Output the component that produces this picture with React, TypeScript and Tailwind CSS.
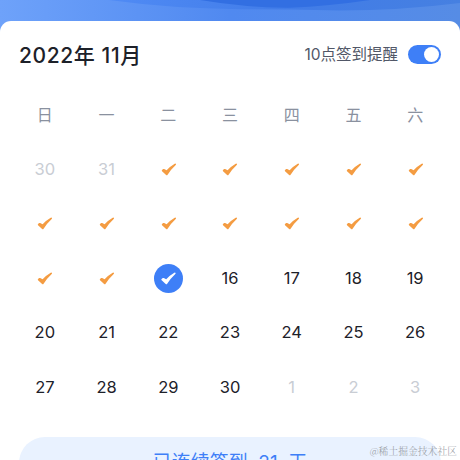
import clsx from "clsx";
import { useState } from "react";

const WEEKDAYS = ["日", "一", "二", "三", "四", "五", "六"];

type DayState = "outside" | "signed" | "today" | "future";

interface Day {
    date: number;
    state: DayState;
}

const TODAY = 15;

const DAYS: Day[] = [
    { date: 30, state: "outside" },
    { date: 31, state: "outside" },
    ...Array.from({ length: 30 }, (_, i): Day => {
        const date = i + 1;
        return { date, state: date < TODAY ? "signed" : date === TODAY ? "today" : "future" };
    }),
    { date: 1, state: "outside" },
    { date: 2, state: "outside" },
    { date: 3, state: "outside" },
];

export default function App() {
    const [remind, setRemind] = useState(true);

    return (
        <div className="relative h-[460px] w-[460px] overflow-hidden bg-white font-['Inter','Noto_Sans_CJK_SC',sans-serif]">
            <Banner />

            <main className="relative mt-[20.5px] h-[440px] rounded-t-[11px] bg-white">
                <header className="flex h-[68px] items-center justify-between pr-[19px] pl-[19px]">
                    <h1 className="pt-px text-[21px] leading-none font-medium tracking-[0.6px] text-[#1d2129]">
                        2022年 11月
                    </h1>
                    <div className="flex items-center gap-[10px]">
                        <span className="pt-px text-[15.5px] leading-none text-[#515767]">10点签到提醒</span>
                        <button
                            type="button"
                            role="switch"
                            aria-checked={remind}
                            onClick={() => setRemind(!remind)}
                            className={clsx(
                                "flex h-[19px] w-[33px] items-center rounded-full px-[2px]",
                                remind ? "justify-end bg-[#3e7ff7]" : "justify-start bg-gray-300"
                            )}
                        >
                            <span className="size-[15px] rounded-full bg-white" />
                        </button>
                    </div>
                </header>

                <div className="mx-[14px] grid h-[53px] grid-cols-7 items-center text-center text-[16px] text-[#8a919f]">
                    {WEEKDAYS.map((name) => (
                        <span key={name}>{name}</span>
                    ))}
                </div>

                <div className="mx-[14px] grid auto-rows-[54.4px] grid-cols-7 place-items-center pt-[0.6px]">
                    {DAYS.map((day, i) => (
                        <DayCell key={i} day={day} />
                    ))}
                </div>

                <div className="mx-[19px] mt-[23px] flex h-[52px] items-center justify-center rounded-full bg-[#e9f2ff] text-[19px] whitespace-pre text-[#3e7ff7]">
                    已连续签到  21  天
                </div>
            </main>

            <span className="absolute right-[3px] bottom-[2px] font-['Noto_Serif_CJK_SC','Noto_Sans_CJK_SC',serif] text-[9.8px] leading-[14px] font-light text-[#979ba2]">
                @稀土掘金技术社区
            </span>
        </div>
    );
}

function DayCell({ day }: { day: Day }) {
    if (day.state === "signed") {
        return <Check className="translate-x-[0.4px] text-[#f49c42]" />;
    }
    if (day.state === "today") {
        return (
            <span className="flex size-[29px] items-center justify-center rounded-full bg-[#3e7ff7]">
                <Check className="text-white" />
            </span>
        );
    }
    return (
        <span className={clsx("text-[16.5px] leading-none", day.state === "outside" ? "text-[#c9cdd4]" : "text-[#1d2129]")}>
            {day.date}
        </span>
    );
}

function Check({ className }: { className: string }) {
    return (
        <svg viewBox="0 0 15 13" className={clsx("h-[13px] w-[15px]", className)} fill="currentColor">
            <path d="M.4 7.9Q.1 7.4.6 7L1.8 6.1Q2.3 5.8 2.8 6.1L5.2 7.3Q8.6 3.4 13.3.7Q14.3.3 14.6.9Q14.8 1.4 14.3 2Q9.7 6.3 6.2 11.7Q5.5 12.6 4.7 11.9Z" />
        </svg>
    );
}

// Blue header strip with two overlapping waves
function Banner() {
    return (
        <svg viewBox="0 0 460 40" className="absolute top-0 left-0 h-10 w-[460px]">
            <defs>
                <linearGradient id="sky" x1="0" x2="1" y1="0" y2="0">
                    <stop offset="0" stopColor="#6ea2fa" />
                    <stop offset=".5" stopColor="#5089f0" />
                    <stop offset="1" stopColor="#568ce5" />
                </linearGradient>
                <linearGradient id="wave" x1="0" x2="1" y1="0" y2="0">
                    <stop offset="0" stopColor="#508bf5" />
                    <stop offset=".5" stopColor="#417ce8" />
                    <stop offset="1" stopColor="#4680e1" />
                </linearGradient>
            </defs>
            <path d="M0 0H460V40H0Z" fill="url(#sky)" />
            <path d="M109 0Q170 8.5 240 9.2Q290 9.2 340 10.5Q400 10.5 460 3V0Z" fill="url(#wave)" />
            <path d="M200 0Q245 7.5 288 7.8Q330 6 370 0Z" fill="#326fe2" />
        </svg>
    );
}
